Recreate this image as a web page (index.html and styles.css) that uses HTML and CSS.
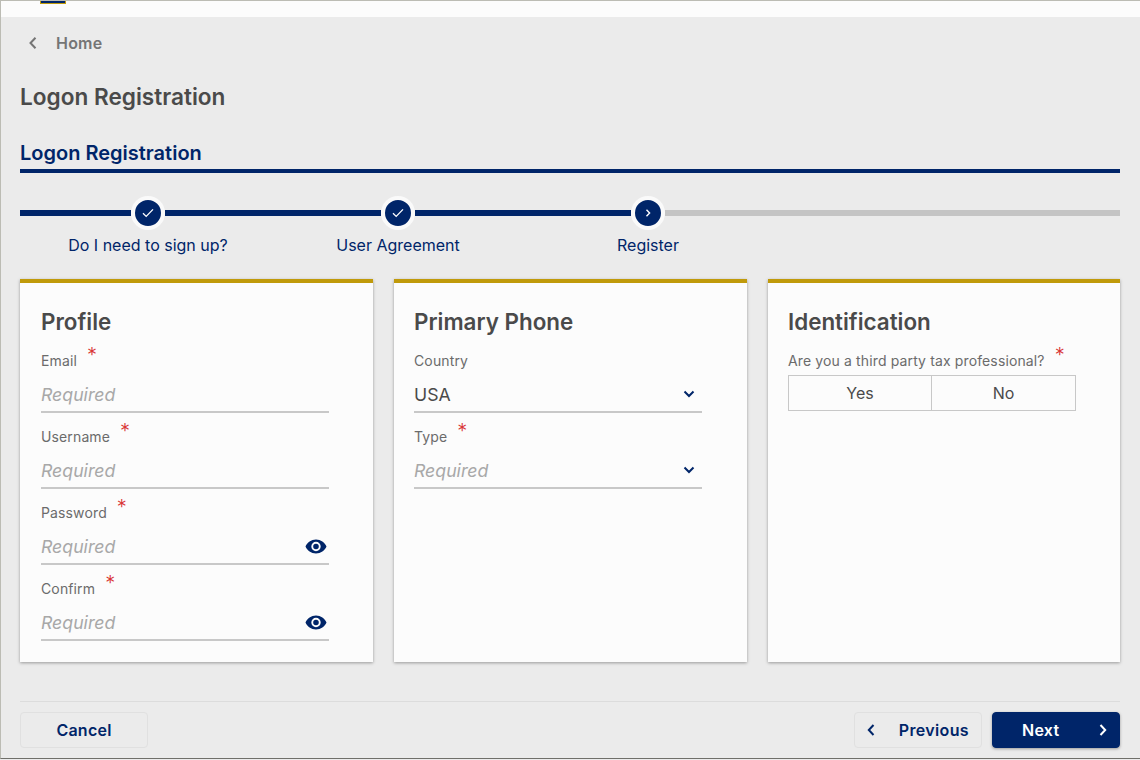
FILE: index.html
```html
<!DOCTYPE html>
<html lang="en">
<head>
<meta charset="utf-8">
<title>Logon Registration</title>
<link rel="stylesheet" href="styles.css">
</head>
<body>
<div class="window">
  <header class="topbar"><div class="logo-sliver"></div></header>
  <main class="content">
    <nav class="crumb">
      <svg class="crumb-icon" width="10" height="14" viewBox="0 0 10 14"><path d="M7.5 1.8 2.5 7l5 5.2" fill="none" stroke="#757575" stroke-width="2"/></svg>
      <span class="crumb-text">Home</span>
    </nav>
    <h1 class="page-title">Logon Registration</h1>
    <h2 class="section-title">Logon Registration</h2>

    <div class="track">
      <div class="seg seg-first"></div>
      <div class="dot"><svg width="12" height="10" viewBox="0 0 12 10"><path d="M1 5.2 4.2 8.4 11 1.4" fill="none" stroke="#fff" stroke-width="1.3"/></svg></div>
      <div class="seg seg-mid"></div>
      <div class="dot"><svg width="12" height="10" viewBox="0 0 12 10"><path d="M1 5.2 4.2 8.4 11 1.4" fill="none" stroke="#fff" stroke-width="1.3"/></svg></div>
      <div class="seg seg-mid"></div>
      <div class="dot"><svg width="6" height="8" viewBox="0 0 6 8"><path d="M1.5 .8 4.6 4 1.5 7.2" fill="none" stroke="#fff" stroke-width="1.4"/></svg></div>
      <div class="seg seg-rest"></div>
    </div>
    <div class="step-labels">
      <span class="step-label">Do I need to sign up?</span>
      <span class="step-label">User Agreement</span>
      <span class="step-label">Register</span>
    </div>

    <div class="cards">
      <section class="card">
        <h3 class="card-title">Profile</h3>
        <div class="field">
          <div class="label">Email<span class="req">*</span></div>
          <div class="input"><span class="placeholder">Required</span></div>
        </div>
        <div class="field">
          <div class="label">Username<span class="req">*</span></div>
          <div class="input"><span class="placeholder">Required</span></div>
        </div>
        <div class="field">
          <div class="label">Password<span class="req">*</span></div>
          <div class="input"><span class="placeholder">Required</span>
            <svg class="eye" width="22" height="15" viewBox="0 0 22 15"><path fill-rule="evenodd" fill="#002569" d="M11 .5C6.2.5 2.2 3.4.5 7.500c1.700 4.100 5.700 7 10.500 7s8.800-2.900 10.500-7C19.800 3.400 15.800.5 11 .5Zm0 11.700a4.700 4.700 0 1 1 0-9.400 4.700 4.700 0 0 1 0 9.400Zm0-7.500a2.800 2.800 0 1 0 0 5.600 2.800 2.800 0 0 0 0-5.600Z"/></svg>
          </div>
        </div>
        <div class="field">
          <div class="label">Confirm<span class="req">*</span></div>
          <div class="input"><span class="placeholder">Required</span>
            <svg class="eye" width="22" height="15" viewBox="0 0 22 15"><path fill-rule="evenodd" fill="#002569" d="M11 .5C6.2.5 2.2 3.4.5 7.500c1.700 4.100 5.700 7 10.500 7s8.800-2.900 10.500-7C19.800 3.400 15.800.5 11 .5Zm0 11.700a4.700 4.700 0 1 1 0-9.400 4.700 4.700 0 0 1 0 9.400Zm0-7.500a2.800 2.800 0 1 0 0 5.600 2.800 2.800 0 0 0 0-5.600Z"/></svg>
          </div>
        </div>
      </section>

      <section class="card card-phone">
        <h3 class="card-title">Primary Phone</h3>
        <div class="field">
          <div class="label">Country</div>
          <div class="input"><span class="value">USA</span>
            <svg class="caret" width="12" height="8" viewBox="0 0 12 8"><path d="M1.500 1.500 6 6l4.500-4.500" fill="none" stroke="#002569" stroke-width="2"/></svg>
          </div>
        </div>
        <div class="field">
          <div class="label">Type<span class="req">*</span></div>
          <div class="input"><span class="placeholder">Required</span>
            <svg class="caret" width="12" height="8" viewBox="0 0 12 8"><path d="M1.500 1.500 6 6l4.500-4.500" fill="none" stroke="#002569" stroke-width="2"/></svg>
          </div>
        </div>
      </section>

      <section class="card card-id">
        <h3 class="card-title">Identification</h3>
        <div class="label">Are you a third party tax professional?<span class="req">*</span></div>
        <div class="toggle">
          <span class="toggle-item toggle-yes">Yes</span>
          <span class="toggle-item toggle-no">No</span>
        </div>
      </section>
    </div>

    <footer class="actions">
      <button class="btn btn-wide">Cancel</button>
      <div class="actions-right">
        <button class="btn btn-prev">
          <svg width="8" height="12" viewBox="0 0 8 12"><path d="M6.500 1 1.800 6l4.700 5" fill="none" stroke="#002569" stroke-width="2"/></svg>
          <span>Previous</span>
        </button>
        <button class="btn btn-next">
          <span>Next</span>
          <svg width="8" height="12" viewBox="0 0 8 12"><path d="M1.500 1 6.200 6l-4.700 5" fill="none" stroke="#fff" stroke-width="2"/></svg>
        </button>
      </div>
    </footer>
  </main>
</div>
</body>
</html>
```
FILE: styles.css
```css
* { box-sizing: border-box; }
html, body { margin: 0; height: 100%; overflow: hidden; background: #ebebeb; }
body { font-family: Inter, "Liberation Sans", sans-serif; }

.window {
  height: 759px;
  border-top: 1px solid #bcbcb4;
  border-left: 1px solid #bcbcb4;
  border-bottom: 1px solid #6f6f6a;
  display: flex;
  flex-direction: column;
}

.topbar { height: 16px; background: #fcfcfc; padding-left: 39px; flex: none; }
.logo-sliver {
  width: 26px;
  height: 3px;
  background: #002569;
  border: 1px solid #c09a0b;
  border-top: 0;
}

.content { padding: 0 20px 0 19px; flex: 1; display: flex; flex-direction: column; }

.crumb { display: flex; align-items: center; height: 20px; margin-top: 16px; }
.crumb-icon { margin-left: 8px; }
.crumb-text { margin-left: 18px; font-size: 16px; font-weight: 600; color: #757575; letter-spacing: .2px; }

.page-title { margin: 28px 0 0; font-size: 22.6px; line-height: 32px; font-weight: 600; color: #4a4a4a; }

.section-title {
  margin: 25px 0 0;
  height: 35px;
  padding-top: 3px;
  font-size: 20px;
  line-height: 24px;
  font-weight: 600;
  color: #002569;
  border-bottom: 4px solid #002569;
}

.track { display: flex; align-items: center; height: 34px; margin-top: 23px; }
.seg { height: 6px; background: #002569; }
.seg-first { width: 111px; }
.seg-mid { width: 216px; }
.seg-rest { flex: 1; background: #c4c4c4; }
.dot {
  width: 34px;
  height: 34px;
  border-radius: 50%;
  background: #002569;
  border: 4px solid #fafafa;
  display: flex;
  align-items: center;
  justify-content: center;
  flex: none;
}

.step-labels { display: flex; padding-left: 3px; margin-top: 3px; }
.step-label { width: 250px; text-align: center; font-size: 16px; line-height: 24px; color: #002569; }

.cards { display: grid; grid-template-columns: 353px 353px 1fr; gap: 21px; margin-top: 22px; height: 383px; }
.card {
  background: #fcfcfc;
  border-top: 4px solid #c09a0b;
  padding: 0 44px 0 21px;
  box-shadow: 0 1px 3px rgba(0, 0, 0, .35);
}
.card-phone { padding-left: 20px; padding-right: 45px; }
.card-id { padding-left: 20px; }
.card-title { margin: 24px 0 13px; font-size: 22.4px; line-height: 30px; font-weight: 600; color: #4a4a4a; }

.field { height: 76px; }
.label { display: flex; height: 24px; font-size: 14px; line-height: 22px; letter-spacing: .13px; color: #6b6b6b; white-space: nowrap; }
.req { margin-left: 10px; font-size: 20px; font-weight: 300; line-height: 10px; color: #d93636; }
.input {
  height: 39px;
  padding-top: 4px;
  border-bottom: 2px solid #c8c8c8;
  display: flex;
  align-items: center;
  justify-content: space-between;
  font-size: 17.7px;
}
.placeholder { font-style: italic; color: #a8a8a8; }
.value { color: #4a4a4a; }
.eye { margin-right: 2px; }
.caret { margin-right: 7px; margin-bottom: 2px; }

.toggle { display: flex; width: 288px; height: 36px; margin-top: 1px; border: 1px solid #c8c8c8; }
.toggle-item { text-align: center; font-size: 16px; line-height: 34px; color: #4a4a4a; }
.toggle-yes { flex: 0 0 142px; }
.toggle-no { flex: 1; border-left: 1px solid #c8c8c8; }

.actions {
  margin-top: 39px;
  padding-top: 10px;
  border-top: 1px solid #dcdcdc;
  display: flex;
  justify-content: space-between;
}
.actions-right { display: flex; gap: 10px; }
.btn {
  width: 128px;
  height: 36px;
  border: 1px solid #e0e0e0;
  border-radius: 4px;
  background: transparent;
  font-family: inherit;
  font-size: 16px;
  font-weight: 600;
  letter-spacing: .25px;
  color: #002569;
  display: flex;
  align-items: center;
  justify-content: center;
  padding: 0 12px;
}
.btn-prev { justify-content: space-between; letter-spacing: .35px; }
.btn-next {
  justify-content: space-between;
  padding-left: 29px;
  background: #002569;
  border-color: #002569;
  color: #fff;
  box-shadow: 0 1px 3px rgba(0, 0, 0, .35);
}
```
